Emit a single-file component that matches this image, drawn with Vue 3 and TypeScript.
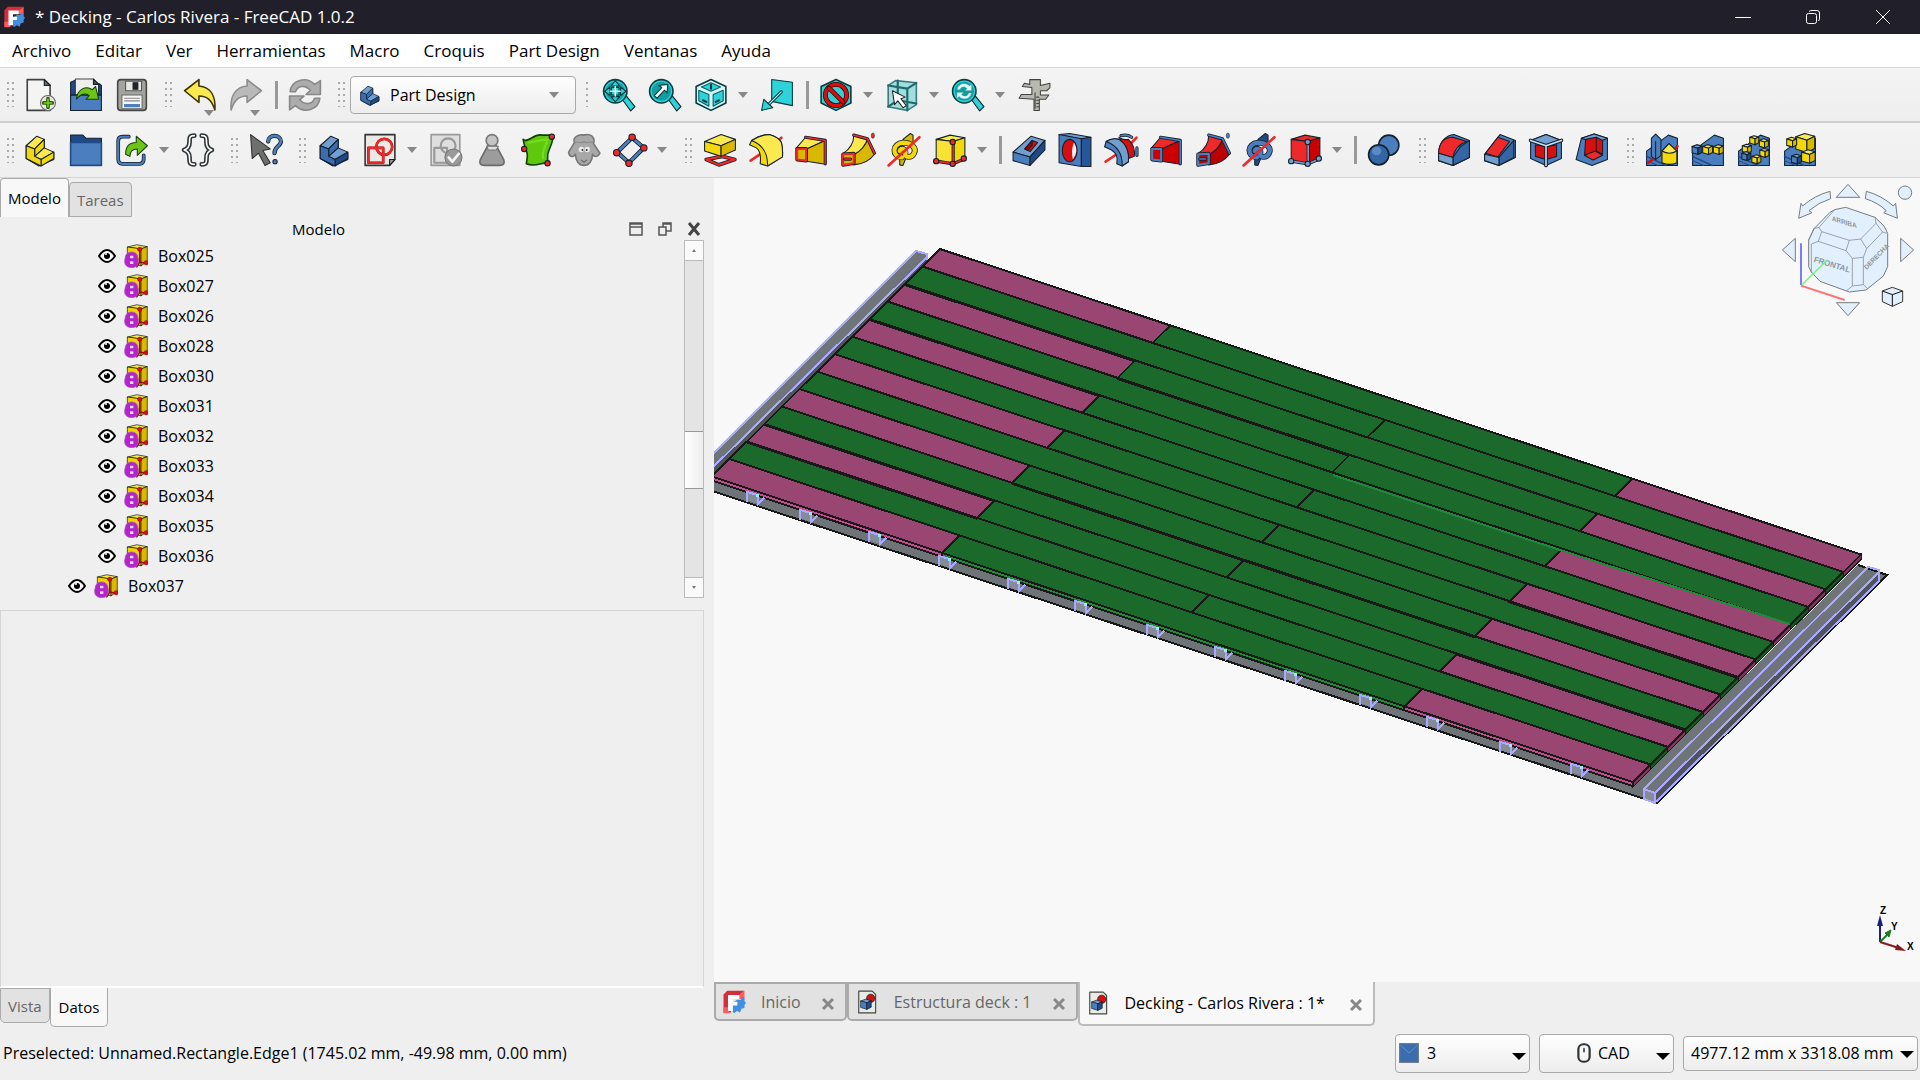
<script setup lang="ts">
import { ref } from 'vue'

type Tool = { icon: string; label: string; menu?: boolean; corner?: boolean; sep?: boolean }

const INK = '#15202b'
const p = (d: string, fill = 'none', stroke = INK, w = 2) =>
  `<path d="${d}" fill="${fill}" stroke="${stroke}" stroke-width="${w}" stroke-linejoin="round" stroke-linecap="round"/>`
const c = (x: number, y: number, r: number, fill: string, stroke = INK, w = 2) =>
  `<circle cx="${x}" cy="${y}" r="${r}" fill="${fill}" stroke="${stroke}" stroke-width="${w}"/>`
const wire = (d: string, col: string, w = 5) => p(d, 'none', INK, w + 3) + p(d, 'none', col, w)
const face = (x: number, y: number, s: number, pts: number[][], fill: string) =>
  p('M' + pts.map(([a, b]) => `${x + a * s} ${y + b * s}`).join('L') + 'z', fill)
const cube = (x: number, y: number, s: number, t: string, l: string, r: string) =>
  face(x, y, s, [[0, -0.8], [0.8, -1.1], [1.7, -0.85], [1, -0.5]], t) +
  face(x, y, s, [[0, -0.8], [1, -0.5], [1, 0.6], [0, 0.3]], l) +
  face(x, y, s, [[1, -0.5], [1.7, -0.85], [1.7, 0.25], [1, 0.6]], r)

const B = '#4a7ebf', BL = '#729fcf', BD = '#204a87'
const Y = '#f3d90c', YL = '#fce94f', YD = '#d9b800'
const R = '#d90f0f', RL = '#ef2929', RD = '#a40000'
const T = '#2cd3d8', TD = '#0f9ea3'

const stair = (a: string, b: string, d: string) =>
  p('M6 24L26 8L40 13V30L58 38V50L30 62L6 48z', b) +
  p('M6 24L26 6L40 12L22 30z', a) +
  p('M22 30L40 12V28L22 44z', b) +
  p('M22 44L40 28L58 36L34 50z', a) +
  p('M34 50L58 36V48L34 62z', d) +
  p('M6 24L22 30V44L34 50V62L6 48z', b)
const lens = (inner: string) =>
  p('M38 40L46 34L62 54L54 62z', T) + c(25, 25, 22, T, '#0a3c40', 3) + c(25, 25, 18, TD, 'none', 0) + inner
const loft = (f: string, d: string, e: string) =>
  p('M2 29L20 8L57 14L22 30z', f) + p('M22 30L57 14V59L22 53z', d) +
  wire('M20 8L57 14V58', e, 3) + p('M4 30H21V52L4 50z', d, INK, 7) + p('M4 30H21V52L4 50z', d, e, 4)
const sweep = (f: string, d: string, e: string) =>
  p('M50 11Q44 30 24 40V60Q50 58 63 40z', d) + p('M24 4Q24 26 3 39L24 41Q44 30 50 11z', f) +
  wire('M24 4L50 11L63 38', e, 3) + p('M4 40L24 39V57L4 60z', d, INK, 7) + p('M4 40L24 39V57L4 60z', d, e, 4) +
  p('M7 49H18', 'none', INK, 6) + p('M7 49H18', 'none', e, 3) + `<ellipse cx="60" cy="5" rx="3" ry="5" fill="${e}" stroke="${INK}"/>`
const helix = (f: string, d: string) =>
  p('M30 12L44 1L49 4V20L36 18z', d) + p('M24 44L36 46L30 61L24 60z', d) +
  wire('M28 46C8 44 10 20 30 18C46 18 56 28 51 38C46 48 34 46 34 40C38 30 26 26 24 34', f, 8) +
  p('M3 61L61 8', 'none', RL, 5)
const solid = (a: string, b: string, d: string, e: string) =>
  p('M6 12L32 4L60 9L38 16z', a) + p('M6 12L38 16V58L6 52z', b) + p('M38 16L60 9V48L38 58z', d) +
  wire('M38 18V58M6 53L38 58L59 49', e, 3) + c(37, 17, 5, e) + c(6, 53, 5, e) + c(37, 58, 5, e) + c(58, 48, 5, e)
const wedge = p('M3 34L44 4L61 10V61H3z', B) + p('M3 44L40 61', 'none', BD, 3) + p('M3 52L24 61', 'none', BD, 2)
const yb = (x: number, y: number, s: number) => cube(x, y, s, YL, Y, YD)
const bb = (x: number, y: number, s: number) => cube(x, y, s, BL, B, BD)

const icons: Record<string, string> = {
  doc: p('M8 3H40L51 14V61H8z', '#f4f4f2', '#3d4144', 3) + p('M40 3V14H51z', '#666') + c(47, 47, 14, '#e8e8e4', '#666', 2) + p('M47 39V55M39 47H55', 'none', '#2e5d05', 7) + p('M47 40V54M40 47H54', 'none', '#73d216', 3),
  open: p('M3 8L12 4V60H3z', BD) + p('M12 2H46L56 12V50H12z', '#eeeeec', '#444', 2) + p('M46 2V12H56z', '#555') + p('M3 32H61V61H3z', B) + p('M3 32H61V14L56 10V32z', BD) + p('M14 40C16 20 32 14 44 22L50 16L56 40L32 40L38 33C30 28 22 30 14 40z', '#6cc516', '#17400a'),
  save: p('M5 9Q5 3 11 3H53Q59 3 59 9V55Q59 61 53 61H11Q5 61 5 55z', '#a3a49f', '#454744', 3) + p('M20 6H50V24H20z', '#e6e6e2', '#555') + p('M34 9H43V21H34z', '#222') + p('M13 32H51V58H13z', '#f5f5f5', '#666') + p('M18 38H46M18 43H46', 'none', '#888', 2) + p('M17 49H47V55H17z', B, 'none', 0),
  undo: p('M3 24L30 3V15C52 17 62 34 60 60C54 42 46 34 30 34V46z', YL, '#3d3500', 3),
  redo: p('M61 24L34 3V15C12 17 2 34 4 60C10 42 18 34 34 34V46z', '#b9b9b9', '#8c8c8c', 3),
  refresh: p('M4 26C6 4 34-4 50 12L61 5V31H34L42 23C32 12 18 14 14 26z', '#acacac', '#888', 3) + p('M60 38C58 60 30 68 14 52L3 60V34H30L22 41C32 52 46 50 50 38z', '#acacac', '#888', 3),
  body: stair(BL, '#3a6cae', BD),
  part: stair(YL, '#f0d614', Y),
  fitall: lens(p('M25 5L33 15H17zM25 45L33 35H17zM5 25L15 17V33zM45 25L35 17V33zM18 18H32V32H18z', T, '#06393c', 2) + p('M25 16V34M16 25H34', 'none', '#e5ffff', 3)),
  fitsel: lens(p('M37 12L36 28L31 23L17 38L12 33L26 18L20 14z', '#fff', '#06393c', 2)),
  iso: p('M32 3L60 16V47L32 61L4 47V16z', '#d5f7f7', '#083a3d', 3) + p('M32 9L50 17L32 25L14 17zM9 23L28 31V53L9 43zM55 23L36 31V53L55 43z', T, '#0b5d60', 2) + p('M32 13V20M17 42L23 45M47 42L41 45', 'none', '#06393c', 4),
  linkview: p('M22 3L61 8V52L22 44z', T, '#0a3c40', 2) + p('M16 50L40 26', 'none', '#0a3c40', 6) + p('M16 50L40 26', 'none', '#b6ffff', 2) + p('M3 61L7 40L24 56z', T, '#0a3c40', 2),
  drawstyle: p('M32 3L60 16V47L32 61L4 47V16z', T, '#083a3d', 3) + c(32, 32, 20, 'none', '#3a0000', 9) + c(32, 32, 20, 'none', R, 6) + p('M19 19L45 45', 'none', '#3a0000', 9) + p('M19 19L45 45', 'none', R, 6),
  boxsel: p('M6 14L20 5L59 9V50L42 61L6 54z', '#9fdfe0', '#3c7c7e', 3) + p('M6 14L42 20L59 9M42 20V61M6 54L24 42V5M24 42L59 48', 'none', '#21686b', 4) + p('M14 24L38 36L30 39L40 52L34 56L24 43L18 50z', '#fff', '#222', 2),
  sync: lens(p('M11 22C14 8 30 8 35 15L39 11V24H26L30 20C24 14 18 18 17 22zM39 28C36 42 20 42 15 35L11 39V27H24L20 31C26 36 32 34 33 28z', '#dffcfc', '#3b8d90', 1)),
  caliper: p('M24 3H44V14L62 10V18L56 24H44V32H60L54 40H42V61H32V40L4 38L8 31H28V18L10 16L14 10L24 12z', '#b7b9b0', '#41433f', 2) + p('M34 28V57M37 36H41M37 42H41M37 48H41M37 54H41', 'none', '#41433f', 2),
  folder: p('M3 4H26L32 10H61V20H3z', BD) + p('M3 18H61V61H3z', B, BD, 3),
  link: wire('M26 7H14Q6 7 6 15V49Q6 58 14 58H46Q54 58 54 50V42', B, 4) + p('M20 40C20 22 30 18 40 18V6L61 24L42 42V30C32 30 28 34 28 44z', '#6cc516', '#17400a', 2),
  braces: p('M25 5C16 5 16 8 16 18C16 27 12 30 6 32C12 34 16 37 16 46C16 56 16 59 25 59M39 5C48 5 48 8 48 18C48 27 52 30 58 32C52 34 48 37 48 46C48 56 48 59 39 59', 'none', '#2e3436', 9) + p('M25 5C16 5 16 8 16 18C16 27 12 30 6 32C12 34 16 37 16 46C16 56 16 59 25 59M39 5C48 5 48 8 48 18C48 27 52 30 58 32C52 34 48 37 48 46C48 56 48 59 39 59', 'none', '#fff', 3),
  whats: p('M3 3L40 30L26 33L40 56L30 61L18 38L6 48z', '#6d706c', '#2f3130', 2) + wire('M36 16C36 2 60 2 60 16C60 26 48 24 48 38', B, 5) + c(49, 54, 4, B),
  sketch: p('M4 3H60V50L50 61H4z', '#e9e9e6', '#333', 3) + p('M50 61V50H60z', '#999') + p('M10 28H38V56H10z', 'none', RD, 5) + c(40, 26, 15, 'none', RD, 5) + p('M10 28H38V56H10z', 'none', RL, 4) + c(40, 26, 15, 'none', RL, 4),
  validate: p('M4 3H58V61H4z', '#dedede', '#999', 3) + p('M10 28H34V56H10z', 'none', '#999', 4) + c(36, 24, 14, 'none', '#999', 4) + c(46, 46, 16, '#999', '#777', 2) + p('M37 46L44 54L56 39', 'none', '#f4f4f4', 5),
  pose: p('M24 24L10 50Q6 61 18 61H46Q58 61 54 50L40 24z', '#9c9c9c', '#6a6a6a', 3) + c(32, 14, 11, '#c4c4c4', '#777', 3) + p('M22 25H44L40 32H25z', '#ddd', '#777', 2),
  surface: p('M4 12C14 20 24 0 40 4H60C62 24 44 34 52 58C40 52 30 66 10 58C12 44 14 40 8 30z', '#5fc80d', '#123f05', 3) + p('M14 18C26 18 36 12 50 12C46 26 38 36 42 48', 'none', '#74dc22', 4) + c(58, 7, 5, RL) + c(6, 30, 5, RL) + c(50, 57, 5, RL),
  sheep: p('M14 18C10 8 22 2 32 4C44 0 54 8 50 20L62 38C58 46 52 46 48 40C48 52 42 61 32 61C22 61 16 52 16 40C10 48 4 44 3 36z', '#a8a8a8', '#787878', 3) + p('M16 18C20 14 26 22 32 16C38 22 44 14 48 18', 'none', '#8a8a8a', 2) + c(27, 31, 5, '#eee', 'none', 0) + c(38, 31, 5, '#eee', 'none', 0) + c(29, 32, 2, '#333', 'none', 0) + c(37, 32, 2, '#333', 'none', 0) + p('M27 51L32 55L37 51', 'none', '#666', 2),
  diamond: wire('M36 9L58 28L30 56L8 36z', B, 5) + c(36, 8, 6, RL) + c(58, 28, 6, RL) + c(30, 57, 6, RL) + c(7, 37, 6, RL),
  pad: wire('M6 50L36 44L60 50L30 60z', RL, 4) + p('M3 16L34 3L61 12L34 24z', YL) + p('M3 16L34 24V44L3 34z', Y) + p('M34 24L61 12V32L34 44z', YD),
  revolve: p('M3 52L24 38M50 18L61 9', 'none', RL, 5) + p('M1 22L5 14Q22 3 38 3Q56 8 61 18Q64 29 63 45L35 62L21 58Q24 36 14 28z', Y) + p('M5 14Q22 3 38 3Q56 8 61 18Q64 29 63 45L35 62Q36 26 5 14z', YL),
  loft: loft(YL, YD, RL),
  sweep: sweep(YL, YD, RL),
  helix: helix(Y, YD),
  solid: solid(YL, '#f8e234', Y, RL),
  pocket: p('M2 36L36 6L62 14L34 45z', BL) + p('M2 36L34 45V61L2 52z', B) + p('M34 45L62 14V32L34 61z', BD) + p('M24 30L38 14L48 18L34 35z', R) + p('M24 30L38 14V23L30 32z', RD),
  hole: p('M2 3L22 1L62 8L44 12z', BL) + p('M2 3L44 11V63L2 56z', B) + p('M44 11L62 8V63H44z', '#28569a') + `<ellipse cx="22" cy="33" rx="14" ry="21" fill="${R}" stroke="${INK}" stroke-width="2"/>` + p('M30 18Q40 34 28 50Q24 34 30 18z', '#f2f2f2', 'none', 0),
  groove: p('M3 54L24 40M50 20L61 9', 'none', RL, 5) + p('M28 8Q36 14 46 12Q60 26 57 44L46 48Q40 22 28 8z', R) + wire('M32 5Q44 2 52 8', B, 3) + wire('M62 28V42', B, 3) + p('M1 26L4 16Q16 8 28 12Q44 22 46 42V54L34 62L24 58Q28 40 14 32z', B) + p('M4 16Q16 8 28 12Q44 22 46 42V54L34 62Q36 28 4 16z', BL),
  subloft: loft(RL, '#c00', B),
  subsweep: sweep(RL, '#b00', B),
  subhelix: helix(B, BD),
  subsolid: solid(RL, RL, '#cc0000', BL),
  boolean: c(41, 23, 19, B, INK, 3) + c(22, 41, 19, '#3465a4', INK, 3) + `<ellipse cx="18" cy="34" rx="9" ry="8" fill="#5a8ac5"/>`,
  fillet: p('M3 38C4 16 18 4 32 3L61 14V46L30 61L3 52z', B) + p('M30 61V46L44 26L61 14V46z', '#3465a4') + p('M3 38C4 16 16 8 30 8L56 16C38 22 32 34 30 46z', RL) + p('M3 38L30 46V61L3 52z', BL),
  chamfer: p('M3 40L32 3L61 14V46L30 61L3 52z', B) + p('M30 61V46L58 14V46z', '#3465a4') + p('M5 38L28 8L50 16L28 45z', RL) + p('M3 40L30 46V61L3 52z', BL),
  draft: p('M3 14L32 3L61 14V48L32 61L3 48z', B) + p('M3 14L32 3L61 14L32 24z', BL) + p('M12 22L32 26L52 22V44L32 50L12 44z', R) + p('M32 24V61M32 24L3 14M32 24L61 14', 'none', INK, 7) + p('M32 24V61M32 24L3 14M32 24L61 14', 'none', '#c8e0f5', 3),
  thickness: p('M12 10L36 2L61 10V50L32 61L2 50z', B) + p('M12 10L36 2L61 10L46 16L18 12z', BL) + p('M20 12L40 8L52 14V38L34 50L18 42z', R) + p('M40 8V34L18 42M40 34L52 40', 'none', INK, 2) + p('M18 42L38 34L52 42L34 51z', RL),
  mirror: wedge + p('M12 10L20 2L30 12V42L20 50L12 44z', B) + p('M20 50V16', 'none', INK, 2) + p('M6 56L14 50M58 28L61 25', 'none', R, 5) + p('M32 34L45 20L60 34V56Q46 62 32 56z', Y) + p('M32 34L45 20L60 34Q46 42 32 34z', YL),
  linear: wedge + bb(2, 34, 11) + yb(22, 34, 11) + yb(42, 34, 11),
  polar: wedge + yb(24, 16, 10) + yb(42, 22, 10) + yb(10, 32, 10) + yb(43, 40, 10) + bb(9, 46, 10) + yb(28, 52, 10),
  multi: wedge + yb(24, 24, 21) + yb(7, 20, 11) + bb(16, 52, 11) + yb(35, 48, 15),
  box: p('M10 8L34 2L62 7L46 13z', YL) + p('M10 8L46 13V58L10 52z', '#f0d400') + p('M46 13L62 7V46L46 58z', YD) + p('M42 14V48L60 52M42 48L34 61', 'none', '#8c1010', 4) + c(42, 14, 6, R, '#700', 1) + c(59, 50, 6, R, '#700', 1) +
    p('M4 34Q5 22 20 21Q36 22 37 36Q39 40 38 50Q36 63 20 63Q4 62 2 50Q1 42 4 34z', '#b324cc', '#b04cc0', 2) + p('M16 31H25V38H16zM16 46H25V53H16z', '#dcdce0', 'none', 0),
  logo: p('M4 60V12L14 2H60L44 16H24V60z', '#d32f3a', 'none', 0) + p('M4 46H20V62H4zM46 14L60 2V24H46z', '#ff5a5f', 'none', 0) + p('M40 26H50L54 18L60 22V30L64 34L60 40V48L52 50L48 60L40 56L32 62L26 54V36z', '#418fde', 'none', 0) + p('M16 13H46V24H29V31H41V41H29V56H16z', '#fff', 'none', 0),
  page: p('M10 3H46L55 12V61H10z', '#e9ece6', '#43463f', 3) + c(42, 22, 11, R) + cube(16, 42, 16, BL, B, BD),
  mouse: `<rect x="14" y="4" width="36" height="56" rx="16" fill="none" stroke="#2e3436" stroke-width="7"/>` + p('M32 18V28', 'none', '#2e3436', 5),
  mail: p('M2 2H62V62H2z', '#3a6cae', '#6d7b8a', 4) + p('M6 8L32 32L58 8', 'none', '#78a5d6', 2),
}

const menus = ['Archivo', 'Editar', 'Ver', 'Herramientas', 'Macro', 'Croquis', 'Part Design', 'Ventanas', 'Ayuda']

const fileTools: Tool[] = [
  { icon: 'doc', label: 'Nuevo' }, { icon: 'open', label: 'Abrir' }, { icon: 'save', label: 'Guardar' },
]
const editTools: Tool[] = [
  { icon: 'undo', label: 'Deshacer', corner: true }, { icon: 'redo', label: 'Rehacer', corner: true },
  { icon: 'refresh', label: 'Actualizar', sep: true },
]
const viewTools: Tool[] = [
  { icon: 'fitall', label: 'Ajustar todo' }, { icon: 'fitsel', label: 'Ajustar selección' },
  { icon: 'iso', label: 'Isométrica', menu: true }, { icon: 'linkview', label: 'Ir al objeto vinculado' },
  { icon: 'drawstyle', label: 'Estilo de dibujo', menu: true, sep: true },
  { icon: 'boxsel', label: 'Vista de selección', menu: true }, { icon: 'sync', label: 'Sincronizar vista', menu: true },
  { icon: 'caliper', label: 'Medir' },
]
const lowerGroups: Tool[][] = [
  [{ icon: 'part', label: 'Crear pieza' }, { icon: 'folder', label: 'Crear grupo' }, { icon: 'link', label: 'Crear vínculo', menu: true }, { icon: 'braces', label: 'Variables' }],
  [{ icon: 'whats', label: '¿Qué es esto?' }],
  [{ icon: 'body', label: 'Crear cuerpo' }, { icon: 'sketch', label: 'Crear croquis', menu: true }, { icon: 'validate', label: 'Validar croquis' },
    { icon: 'pose', label: 'Verificar geometría' }, { icon: 'surface', label: 'Forma enlazada' }, { icon: 'sheep', label: 'Clon' }, { icon: 'diamond', label: 'Referencia', menu: true }],
  [{ icon: 'pad', label: 'Extruir' }, { icon: 'revolve', label: 'Revolución' }, { icon: 'loft', label: 'Proyección aditiva' }, { icon: 'sweep', label: 'Barrido aditivo' },
    { icon: 'helix', label: 'Hélice aditiva' }, { icon: 'solid', label: 'Primitiva aditiva', menu: true }, { icon: 'pocket', label: 'Vaciado', sep: true },
    { icon: 'hole', label: 'Agujero' }, { icon: 'groove', label: 'Ranura' }, { icon: 'subloft', label: 'Proyección sustractiva' }, { icon: 'subsweep', label: 'Barrido sustractivo' },
    { icon: 'subhelix', label: 'Hélice sustractiva' }, { icon: 'subsolid', label: 'Primitiva sustractiva', menu: true }, { icon: 'boolean', label: 'Operación booleana', sep: true }],
  [{ icon: 'fillet', label: 'Redondeo' }, { icon: 'chamfer', label: 'Chaflán' }, { icon: 'draft', label: 'Ángulo de salida' }, { icon: 'thickness', label: 'Espesor' }],
  [{ icon: 'mirror', label: 'Simetría' }, { icon: 'linear', label: 'Patrón lineal' }, { icon: 'polar', label: 'Patrón polar' }, { icon: 'multi', label: 'Multitransformación' }],
]
const upperGroups: Tool[][] = [fileTools, editTools]

const treeItems = ['025', '027', '026', '028', '030', '031', '032', '033', '034', '035', '036'].map((n) => ({ name: `Box${n}`, depth: 1 }))
treeItems.push({ name: 'Box037', depth: 0 })

const docs = [
  { icon: 'logo', name: 'Inicio' },
  { icon: 'page', name: 'Estructura deck : 1' },
  { icon: 'page', name: 'Decking - Carlos Rivera : 1*' },
]
const activeDoc = ref(2)

// Deck geometry: u runs along the boards (0..1), k counts the rows across.
const ROWS = 13
const at = (u: number, k: number, dy = 0) => `${940 + 921 * u - 17.55 * k},${249 + 305.5 * u + 17.5 * k + dy}`
const quad = (u0: number, k0: number, u1: number, k1: number) => [at(u0, k0), at(u1, k0), at(u1, k1), at(u0, k1)].join(' ')
type Board = { pts: string; color: string }
const boards: Board[] = []
for (let k = 0; k < ROWS; k++) {
  const cuts = k % 2 ? [0, 0.502, 1] : [0, 0.25, 0.752, 1]
  for (let i = 0; i < cuts.length - 1; i++) {
    const pink = k % 2 === 0 && i !== 1
    boards.push({ pts: quad(cuts[i], k, cuts[i + 1], k + 1), color: pink ? '#9a4672' : '#1b6a2b' })
  }
}
const ends = Array.from({ length: ROWS }, (_, k) => ({
  pts: [at(1, k), at(1, k + 1), at(1, k + 1, 5), at(1, k, 5)].join(' '),
  color: k % 2 ? '#145522' : '#7d355b',
}))
const fronts = [[0, 0.25, '#c0508c'], [0.25, 0.752, '#1f8a37'], [0.752, 1, '#c0508c']].map(([a, b, color]) => ({
  pts: [at(+a, ROWS), at(+b, ROWS), at(+b, ROWS, 4), at(+a, ROWS, 4)].join(' '),
  color: String(color),
}))
const seams = [[0, 0.25, 2], [0, 0.25, 4], [0.25, 0.5, 3], [0.25, 0.752, 9], [0, 0.25, 10], [0, 0.25, 11], [0.75, 1, 7], [0.75, 1, 10]].map(
  ([a, b, k]) => `M${at(a, k, 1)}L${at(b, k, 1)}`,
)
const joists = [[746, 491], [799, 509], [868, 531], [938, 555], [1007, 578], [1074, 600], [1146, 624], [1214, 646], [1284, 670], [1359, 694], [1426, 716], [1499, 741], [1570, 763]]
</script>

<template>
  <div class="window">
    <header class="titlebar">
      <svg class="app-logo" viewBox="0 0 64 64" v-html="icons.logo"></svg>
      <h1>* Decking - Carlos Rivera - FreeCAD 1.0.2</h1>
      <div class="window-buttons">
        <button aria-label="Minimizar"><svg viewBox="0 0 16 16"><path d="M0 8.5h16" /></svg></button>
        <button aria-label="Restaurar"><svg viewBox="0 0 16 16"><rect x="1.5" y="4.5" width="10" height="10" rx="2" /><path d="M4 2.5Q5 1.5 7 1.5H12Q14.5 1.5 14.5 4V9Q14.5 11 13.5 12" /></svg></button>
        <button aria-label="Cerrar"><svg viewBox="0 0 16 16"><path d="M1 1L15 15M15 1L1 15" /></svg></button>
      </div>
    </header>

    <nav class="menubar">
      <button v-for="m in menus" :key="m">{{ m }}</button>
    </nav>

    <div class="toolbar">
      <template v-for="(g, gi) in upperGroups" :key="gi">
        <span class="grip"></span>
        <template v-for="t in g" :key="t.icon">
          <span v-if="t.sep" class="sep"></span>
          <button class="tool" :aria-label="t.label">
            <svg class="icon" viewBox="0 0 64 64" v-html="icons[t.icon]"></svg>
            <i v-if="t.corner" class="caret corner"></i>
          </button>
        </template>
      </template>
      <span class="grip"></span>
      <div class="combo workbench">
        <svg class="combo-icon" viewBox="0 0 64 64" v-html="icons.body"></svg>
        <select aria-label="Entorno de trabajo"><option>Part Design</option></select>
        <i class="caret"></i>
      </div>
      <span class="grip tight"></span>
      <template v-for="t in viewTools" :key="t.icon">
        <span v-if="t.sep" class="sep"></span>
        <button class="tool" :aria-label="t.label"><svg class="icon" viewBox="0 0 64 64" v-html="icons[t.icon]"></svg></button>
        <button v-if="t.menu" class="more" :aria-label="t.label + ': opciones'"><i class="caret"></i></button>
      </template>
    </div>

    <div class="toolbar lower">
      <div v-for="(g, gi) in lowerGroups" :key="gi" class="group">
        <span class="grip"></span>
        <template v-for="t in g" :key="t.icon">
          <span v-if="t.sep" class="sep"></span>
          <button class="tool" :aria-label="t.label"><svg class="icon" viewBox="0 0 64 64" v-html="icons[t.icon]"></svg></button>
          <button v-if="t.menu" class="more" :aria-label="t.label + ': opciones'"><i class="caret"></i></button>
        </template>
      </div>
    </div>

    <main class="workspace">
      <aside class="dock">
        <div class="tabs top-tabs">
          <button class="tab active">Modelo</button>
          <button class="tab">Tareas</button>
        </div>
        <div class="dock-title">
          <h2>Modelo</h2>
          <button aria-label="Contraer"><svg viewBox="0 0 16 16"><path d="M2 2H14V14H2zM2 3H14M2 6H14" stroke="#555" stroke-width="1.5" fill="none" /></svg></button>
          <button aria-label="Desacoplar"><svg viewBox="0 0 16 16"><path d="M2 6H9V14H2zM6 6V2H14V10H9M6 3H14" stroke="#555" stroke-width="1.5" fill="none" /></svg></button>
          <button aria-label="Cerrar panel"><svg viewBox="0 0 16 16"><path d="M3 2L13 14M13 2L3 14" stroke="#444" stroke-width="3" fill="none" /></svg></button>
        </div>
        <div class="tree-area">
          <ul class="tree">
            <li v-for="item in treeItems" :key="item.name" :class="{ nested: item.depth }">
              <svg class="eye" viewBox="0 0 18 14"><path d="M1 7Q9-5 17 7Q9 19 1 7z" fill="#fff" stroke="#000" stroke-width="2" /><circle cx="9" cy="7" r="3" /><circle cx="8" cy="5" r="1" fill="#fff" /></svg>
              <svg class="tree-icon" viewBox="0 0 64 64" v-html="icons.box"></svg>
              <span>{{ item.name }}</span>
            </li>
          </ul>
          <div class="scrollbar">
            <button aria-label="Subir"><i class="up"></i></button>
            <div class="track"><div class="thumb"></div></div>
            <button aria-label="Bajar"><i class="down"></i></button>
          </div>
        </div>
        <section class="properties"></section>
        <div class="tabs bottom-tabs">
          <button class="tab">Vista</button>
          <button class="tab active">Datos</button>
        </div>
      </aside>

      <section class="document">
        <div class="canvas">
          <svg class="model" viewBox="714 178 1206 804" shape-rendering="crispEdges">
            <polygon points="916,251 927,254 927,260 714,474 714,453" fill="#6f7478" />
            <polygon points="927,257 927,262 700,488 714,466" fill="#505458" />
            <path d="M700 467L916 251L927 254V260M700 480L927 257" fill="none" stroke="#a9a9ff" stroke-width="2" />
            <polygon points="700,477 1634,785 1858,565 1887,575 1657,803 700,487" fill="#6f7478" />
            <polygon points="1655,793 1879,573 1879,581 1656,803" fill="#505458" />
            <path d="M700 487L1657 803L1887 575L1858 565" fill="none" stroke="#191919" stroke-width="2" />
            <path d="M1644 789L1868 567L1879 570V581L1656 802M1655 793L1879 572" fill="none" stroke="#a9a9ff" stroke-width="2" />
            <path d="M1644 789L1655 793V803L1644 799z" fill="#858c95" stroke="#a9a9ff" stroke-width="2" />
            <g stroke="#191919" stroke-width="1">
              <polygon v-for="(e, i) in ends" :key="i" :points="e.pts" :fill="e.color" />
            </g>
            <g stroke="#191919" stroke-width="2">
              <polygon v-for="(f, i) in fronts" :key="i" :points="f.pts" :fill="f.color" />
              <polygon v-for="(b, i) in boards" :key="i" :points="b.pts" :fill="b.color" />
              <path v-for="(s, i) in seams" :key="i" :d="s" />
            </g>
            <path d="M1333 475L1560 550L1790 624" stroke="#1f8a37" stroke-width="2" fill="none" />
            <g v-for="([x, y], i) in joists" :key="i" :transform="`translate(${x} ${y})`">
              <path d="M0 0L12 4V13L0 9z" fill="#858c95" />
              <path d="M1 11V1L12 4V13L18 7" fill="none" stroke="#a9a9ff" stroke-width="2" />
              <path d="M10 3h3v3h-3z" fill="#9fe9ff" />
            </g>
          </svg>

          <svg class="navcube" viewBox="0 24 540 456" stroke="#777c82" stroke-width="3" fill="#e2effc" stroke-linejoin="round">
            <path d="M324 43L359 82H289zM324 437L289 398H359zM127 240L166 205V275zM521 240L482 205V275z" />
            <path d="M270 64L272 86Q234 98 207 122L216 128L176 145L183 100L188 108Q224 76 270 64z" />
            <path d="M379 64L376 86Q414 98 439 122L431 128L472 145L467 100L460 108Q424 76 379 64z" />
            <circle cx="495" cy="68" r="20" />
            <path d="M284 119L317 112L405 142L432 168L443 190V290L430 318L378 360L328 366L240 334L214 306L206 290V210L222 176L270 127z" />
            <path d="M284 119L237 172L245 185L328 211L362 207L408 160L405 142M237 172L222 176L206 210M245 185L235 214L318 242L328 211M235 214L214 222V306M318 242L337 265V348L370 344V262L380 236L362 207M337 265L370 262M380 236L428 186L408 160M428 186L440 190M337 348L320 362M370 344L383 356" fill="none" stroke-width="2" />
            <g fill="#8f969d" stroke="none" class="cube-text">
              <text transform="translate(220 275) rotate(17)">FRONTAL</text>
              <text class="small" transform="translate(276 152) rotate(17) skewX(20)">ARRIBA</text>
              <text class="small" transform="translate(380 300) rotate(-46)">DERECHA</text>
            </g>
            <path d="M427 363L457 352L488 363V395L457 409L427 395z" stroke="#333" /><path d="M427 363L457 374L488 363M457 374V409" stroke="#111" />
            <path d="M183 220V345" stroke="#7b7bff" stroke-width="6" />
            <path d="M185 345L262 270" stroke="#7bee7b" stroke-width="4" />
            <path d="M183 347L314 390" stroke="#ff7373" stroke-width="6" />
          </svg>

          <svg class="axes" viewBox="0 0 45 54">
            <path d="M5 37V14" stroke="#1b1f86" stroke-width="2" /><path d="M5 10L8 21H2z" fill="#1b1f86" />
            <path d="M5 37L13 29" stroke="#1b7a1f" stroke-width="2" /><path d="M16 25L14 32L10 28z" fill="#1b7a1f" stroke="#1b7a1f" />
            <path d="M5 37L24 43" stroke="#861b1f" stroke-width="2" /><path d="M31 46L20 45L22 39z" fill="#861b1f" />
            <text x="5" y="9">Z</text><text x="16" y="25">Y</text><text x="32" y="45">X</text>
          </svg>
        </div>

        <div class="doc-tabs">
          <div v-for="(d, i) in docs" :key="d.name" class="doc-tab" :class="{ active: i === activeDoc }">
            <button class="doc-name" @click="activeDoc = i">
              <svg viewBox="0 0 64 64" v-html="icons[d.icon]"></svg>
              <span>{{ d.name }}</span>
            </button>
            <button class="doc-close" :aria-label="'Cerrar ' + d.name"><svg viewBox="0 0 12 12"><path d="M1 1L11 11M11 1L1 11" /></svg></button>
          </div>
        </div>
      </section>
    </main>

    <footer class="statusbar">
      <p>Preselected: Unnamed.Rectangle.Edge1 (1745.02 mm, -49.98 mm, 0.00 mm)</p>
      <div class="combo notices">
        <svg class="combo-icon" viewBox="0 0 64 64" v-html="icons.mail"></svg>
        <select aria-label="Notificaciones"><option>3</option></select>
        <i class="caret dark"></i>
      </div>
      <div class="combo navstyle">
        <svg class="combo-icon" viewBox="0 0 64 64" v-html="icons.mouse"></svg>
        <select aria-label="Estilo de navegación"><option>CAD</option></select>
        <i class="caret dark"></i>
      </div>
      <div class="combo dimension">
        <select aria-label="Dimensiones de la vista"><option>4977.12 mm x 3318.08 mm</option></select>
        <i class="caret dark"></i>
      </div>
    </footer>
  </div>
</template>

<style>
body { margin: 0; }
</style>

<style scoped>
* { box-sizing: border-box; }
.window {
  min-height: 100vh;
  display: flex;
  flex-direction: column;
  background: #efefef;
  color: #000;
  font: 16px/22px "Open Sans", "Noto Sans", sans-serif;
}
button { font: inherit; color: inherit; background: none; border: 0; padding: 0; margin: 0; }
svg { display: block; }

.titlebar { height: 34px; display: flex; align-items: center; padding-right: 2px; background: #211f29; color: #fff; }
.app-logo { width: 22px; height: 26px; margin: 0 10px 0 3px; }
.titlebar h1 { flex: 1; margin: 0; font-size: 17px; font-weight: 400; }
.window-buttons { display: flex; }
.window-buttons button { width: 70px; height: 34px; display: grid; place-items: center; }
.window-buttons svg { width: 16px; height: 16px; fill: none; stroke: #fff; stroke-width: 1; }

.menubar { height: 34px; display: flex; align-items: center; gap: 24px; padding-left: 12px; background: #fff; border-bottom: 1px solid #d8d8d8; font-size: 17px; }

.toolbar { height: 55px; display: flex; align-items: center; background: linear-gradient(#f4f4f4, #eee); border-bottom: 2px solid #cfcfcf; }
.toolbar.lower { border-bottom: 1px solid #d4d4d4; }
.group { display: flex; align-items: center; }
.grip { flex: none; width: 22px; height: 25px; padding: 0 5px 0 10px; background: radial-gradient(circle at 1px 1px, #aaa 1px, transparent 1px) 0 0 / 5px 6px content-box content-box; }
.grip.tight { width: 20px; }
.group:nth-child(n + 4) .grip { width: 24px; padding-left: 12px; }
.toolbar > .grip:first-child, .group:first-child .grip { width: 17px; padding-left: 7px; padding-right: 3px; }
.tool { flex: none; position: relative; width: 46px; height: 46px; display: grid; place-items: center; }
.icon { width: 34px; height: 34px; overflow: visible; }
.more { flex: none; width: 20px; height: 46px; display: grid; place-items: center; padding-right: 2px; }
.sep { flex: none; width: 3px; height: 28px; margin: 0 4px 0 6px; background: #999; }
.caret { display: block; width: 0; height: 0; border: 5px solid transparent; border-top: 6px solid #888; border-bottom: 0; }
.caret.corner { position: absolute; right: 9px; bottom: 2px; }
.caret.dark { border-width: 7px 7px 0; border-top-color: #000; }

.combo { position: relative; display: flex; align-items: center; border: 1px solid #a9a9a9; border-radius: 4px; background: linear-gradient(#fefefe, #ededed); }
.combo select { appearance: none; width: 100%; height: 100%; border: 0; margin: 0; background: none; font: inherit; color: #000; outline: 0; }
.combo .combo-icon { position: absolute; pointer-events: none; }
.combo .caret { position: absolute; pointer-events: none; }
.workbench { flex: none; width: 226px; height: 38px; }
.workbench select { padding: 0 36px 0 39px; }
.workbench .combo-icon { left: 8px; width: 22px; height: 22px; }
.workbench .caret { right: 16px; }

.workspace { flex: 1; display: grid; grid-template-columns: minmax(0, 714fr) minmax(0, 1206fr); }
.dock { display: flex; flex-direction: column; padding-right: 10px; }
.tabs { display: flex; font-size: 15px; }
.top-tabs { height: 39px; align-items: flex-end; }
.tab { height: 35px; padding: 0 7px; border: 1px solid #aaa; background: #e2e2e2; color: #666; }
.tab.active { background: #f8f8f8; color: #000; height: 39px; }
.top-tabs .tab { border-radius: 4px 4px 0 0; }
.top-tabs .tab.active { border-bottom: 0; }
.bottom-tabs { height: 38px; align-items: flex-start; }
.bottom-tabs .tab { border-radius: 0 0 5px 5px; }
.bottom-tabs .tab.active { border-top: 0; padding: 0 8px; }
.dock-title { height: 23px; display: flex; align-items: center; gap: 13px; padding: 0 2px 0 22px; }
.dock-title h2 { flex: 1; margin: 0; text-align: center; font-size: 15px; font-weight: 400; }
.dock-title button, .dock-title button svg { width: 16px; height: 16px; }
.tree-area { height: 358px; display: flex; }
.tree { flex: 1; list-style: none; margin: 0; padding: 1px 0 0; }
.tree li { height: 30px; display: flex; align-items: center; padding-left: 68px; }
.tree li.nested { padding-left: 98px; }
.eye { width: 18px; height: 14px; margin-right: 8px; }
.tree-icon { width: 24px; height: 24px; margin-right: 10px; }
.scrollbar { width: 20px; display: flex; flex-direction: column; border: 1px solid #bbb; background: #e4e4e4; }
.scrollbar button { height: 20px; display: grid; place-items: center; background: #fafafa; border: solid #bbb; border-width: 0 0 1px; }
.scrollbar button:last-child { border-width: 1px 0 0; }
.up, .down { width: 0; height: 0; border: 2px solid transparent; }
.up { border-top: 0; border-bottom: 3px solid #777; }
.down { border-bottom: 0; border-top: 3px solid #777; }
.track { flex: 1; display: grid; grid-template-rows: 170fr 58fr 88fr; }
.thumb { grid-row: 2; background: linear-gradient(90deg, #fff, #ededed); border: solid #999; border-width: 1px 0; }
.properties { flex: 1; margin-top: 12px; border: 1px solid #d5d5d5; border-bottom: 2px solid #fff; }

.document { display: flex; flex-direction: column; min-width: 0; }
.canvas { flex: 1; position: relative; background: #f8f8f8; overflow: hidden; min-height: 0; }
.model { width: 100%; height: 100%; }
.navcube { position: absolute; top: 0; right: 0; width: 180px; height: 152px; }
.cube-text { font: bold 24px "Liberation Sans", sans-serif; }
.cube-text .small { font-size: 20px; }
.axes { position: absolute; right: 0; bottom: 23px; width: 45px; height: 54px; }
.axes text { font: bold 10px "Liberation Sans", sans-serif; }

.doc-tabs { height: 44px; display: flex; align-items: flex-start; }
.doc-tab { height: 39px; display: flex; align-items: center; padding: 0 11px 0 6px; border: 2px solid #aaa; border-radius: 0 0 5px 5px; background: #e2e2e2; color: #666; }
.doc-tab.active { height: 44px; border-top: 0; border-color: #bbb; background: #f8f8f8; color: #000; }
.doc-name { display: flex; align-items: center; gap: 15px; }
.doc-name svg { width: 24px; height: 24px; }
.doc-close { margin: 4px 0 0 21px; }
.doc-tab.active .doc-close { margin-left: 25px; }
.doc-close svg { width: 12px; height: 12px; stroke: #888; stroke-width: 3; }

.statusbar { height: 54px; display: flex; align-items: center; gap: 9px; padding: 0 2px 0 3px; }
.statusbar p { flex: 1; margin: 0; }
.notices, .navstyle { width: 135px; height: 39px; }
.notices select { padding-left: 31px; }
.notices .combo-icon { left: 2px; width: 22px; height: 20px; }
.navstyle select { padding-left: 58px; }
.navstyle .combo-icon { left: 34px; width: 20px; height: 22px; }
.statusbar .caret { right: 3px; top: 18px; }
.dimension { width: 235px; height: 35px; }
.dimension select { padding-left: 7px; }
.statusbar .dimension .caret { top: 14px; }
</style>
